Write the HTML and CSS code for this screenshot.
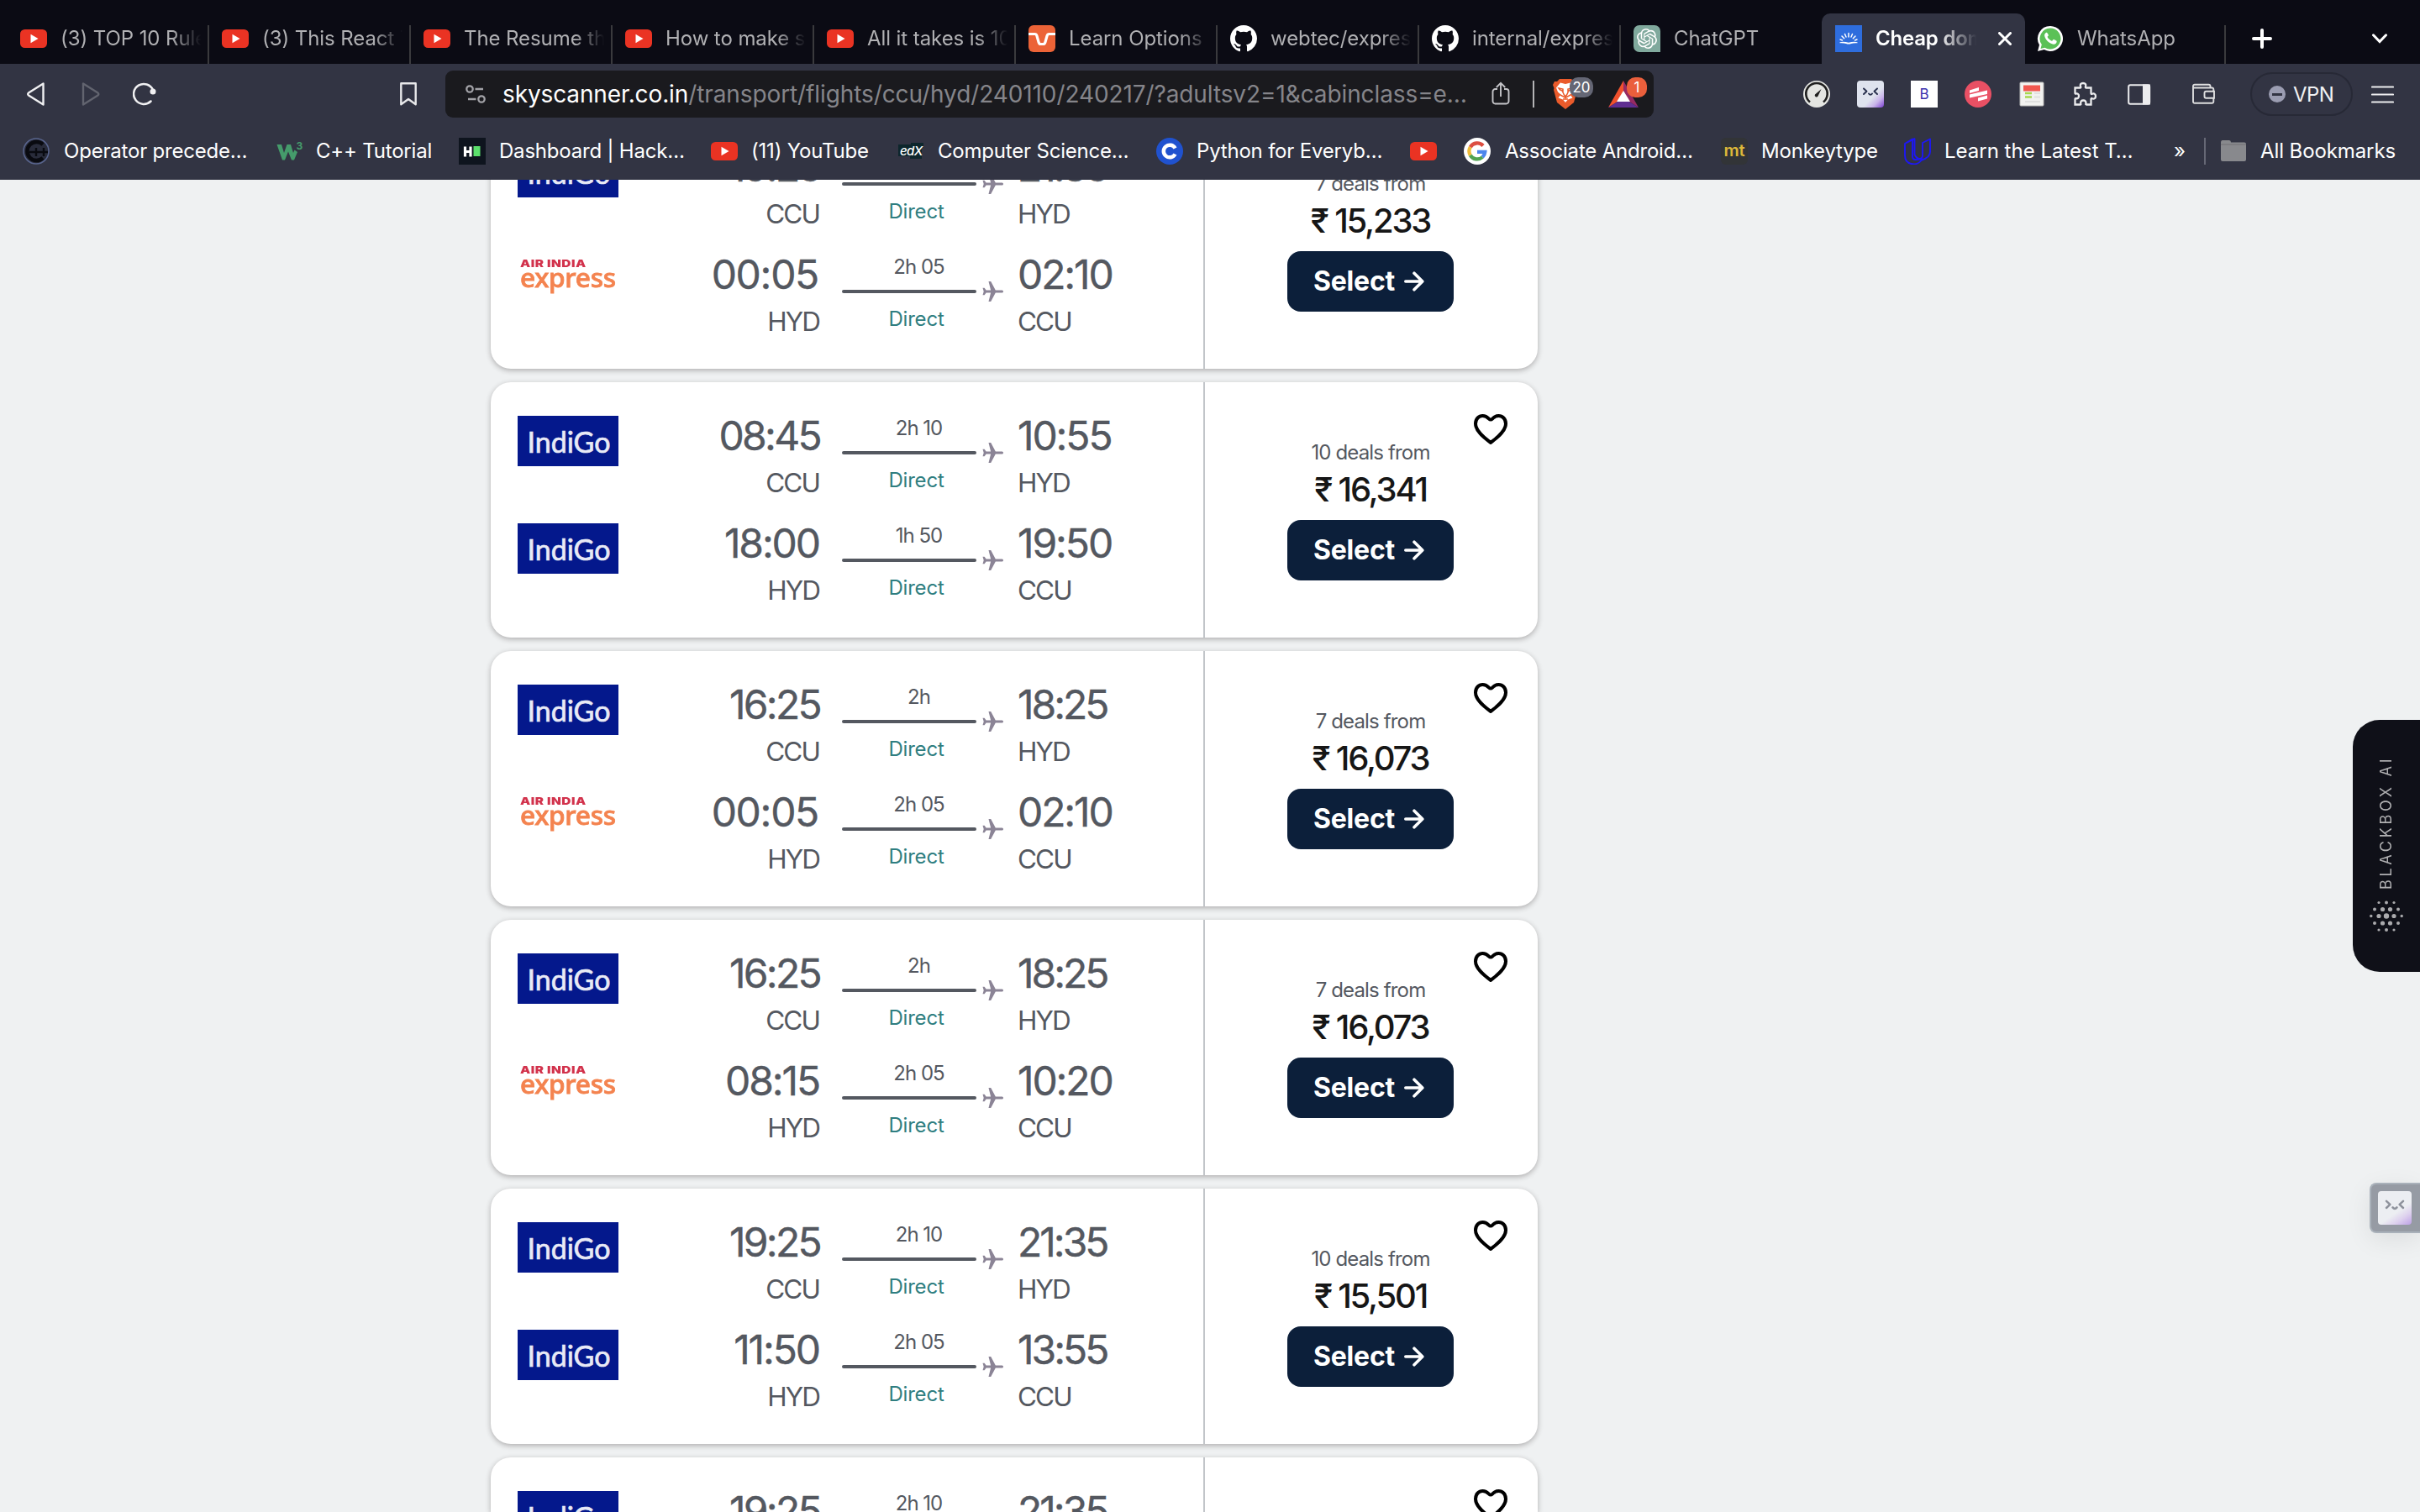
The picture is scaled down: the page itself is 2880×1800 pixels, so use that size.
FILE: index.html
```html
<!DOCTYPE html>
<html lang="en">
<head>
<meta charset="utf-8">
<title>Cheap domestic flights</title>
<link rel="stylesheet" href="styles.css">
</head>
<body>
<svg class="sprite" width="0" height="0" aria-hidden="true">
  <symbol id="yt" viewBox="0 0 32 32"><rect y="5" width="32" height="22" rx="5.5" fill="#ea3323"/><path d="M12.5 10.8v10.4l9-5.2z" fill="#fff"/></symbol>
  <symbol id="github" viewBox="0 0 16 16"><path fill="#fff" d="M8 0C3.58 0 0 3.58 0 8c0 3.54 2.29 6.53 5.47 7.59.4.07.55-.17.55-.38 0-.19-.01-.82-.01-1.49-2.01.37-2.53-.49-2.69-.94-.09-.23-.48-.94-.82-1.13-.28-.15-.68-.52-.01-.53.63-.01 1.08.58 1.23.82.72 1.21 1.87.87 2.33.66.07-.52.28-.87.51-1.07-1.78-.2-3.64-.89-3.64-3.95 0-.87.31-1.59.82-2.15-.08-.2-.36-1.02.08-2.12 0 0 .67-.21 2.2.82.64-.18 1.32-.27 2-.27s1.36.09 2 .27c1.53-1.04 2.2-.82 2.2-.82.44 1.1.16 1.92.08 2.12.51.56.82 1.27.82 2.15 0 3.07-1.87 3.75-3.65 3.95.29.25.54.73.54 1.48 0 1.07-.01 1.93-.01 2.2 0 .21.15.46.55.38A8.01 8.01 0 0 0 16 8c0-4.42-3.58-8-8-8z"/></symbol>
  <symbol id="plane" viewBox="0 0 25 24"><path fill="#8b8496" d="M25 12c0 1-.8 1.500-2 1.500h-7.200L10.200 24H7.500l2.600-10.500H4.600L2.600 16.300H.5L1.700 12 .5 7.700h2.100l2 2.800h5.500L7.500 0h2.700l5.600 10.500H23c1.200 0 2 .5 2 1.500z"/></symbol>
  <symbol id="heart" viewBox="0 0 40 36"><path d="M20 34C16 30.500 2 21.500 2 11.500 2 5.500 6 2 10.500 2 14.500 2 16.500 4 18 5.600Q20 7.600 22 5.600C23.500 4 25.500 2 29.500 2 34 2 38 5.500 38 11.500 38 21.500 24 30.500 20 34Z" fill="none" stroke="#000" stroke-width="4" stroke-linejoin="round"/></symbol>
  <symbol id="arrow" viewBox="0 0 24 24"><path d="M1.800 12H21M12 2.200l9.800 9.800-9.800 9.800" fill="none" stroke="#fff" stroke-width="3.600" stroke-linecap="round" stroke-linejoin="round"/></symbol>
  <symbol id="face" viewBox="0 0 32 32"><path d="M8 9.500l3.500 3.200L8 16M24 9.500l-3.500 3.200L24 16M14 15.500q2 2.500 4 0" fill="none" stroke="currentColor" stroke-width="2" stroke-linecap="round" stroke-linejoin="round"/></symbol>
</svg>

<header class="browser">
  <nav class="tabs">
    <div class="tab"><svg class="fav"><use href="#yt"/></svg><span>(3) TOP 10 Rules</span></div>
    <div class="tab"><svg class="fav"><use href="#yt"/></svg><span>(3) This React T</span></div>
    <div class="tab"><svg class="fav"><use href="#yt"/></svg><span>The Resume that</span></div>
    <div class="tab"><svg class="fav"><use href="#yt"/></svg><span>How to make su</span></div>
    <div class="tab"><svg class="fav"><use href="#yt"/></svg><span>All it takes is 10</span></div>
    <div class="tab"><svg class="fav" viewBox="0 0 32 32"><rect width="32" height="32" rx="6" fill="#ec6337"/><path d="M0 10.500h7.500c1.500 0 2 .6 2.400 2L12 20c.5 2 1 2.500 2.500 2.500h3c1.500 0 2-.5 2.500-2.500l2.100-7.500c.4-1.400.9-2 2.400-2H32" fill="none" stroke="#fff" stroke-width="3.200"/></svg><span>Learn Options T</span></div>
    <div class="tab"><svg class="fav"><use href="#github"/></svg><span>webtec/express</span></div>
    <div class="tab"><svg class="fav"><use href="#github"/></svg><span>internal/express</span></div>
    <div class="tab before-active"><svg class="fav" viewBox="0 0 32 32"><path d="M7 0h18a7 7 0 0 1 7 7v25H7a7 7 0 0 1-7-7V7a7 7 0 0 1 7-7z" fill="#80a99d"/><g transform="translate(4 4)" fill="#fff"><path d="M22.282 9.821a5.985 5.985 0 0 0-.516-4.910 6.046 6.046 0 0 0-6.510-2.900A6.065 6.065 0 0 0 4.981 4.182a5.985 5.985 0 0 0-3.998 2.900 6.046 6.046 0 0 0 .743 7.097 5.980 5.980 0 0 0 .511 4.911 6.051 6.051 0 0 0 6.515 2.900A5.985 5.985 0 0 0 13.260 24a6.056 6.056 0 0 0 5.772-4.206 5.990 5.990 0 0 0 3.997-2.900 6.056 6.056 0 0 0-.747-7.073zM13.260 22.430a4.476 4.476 0 0 1-2.876-1.040l.141-.081 4.779-2.758a.795.795 0 0 0 .392-.681v-6.737l2.020 1.168a.071.071 0 0 1 .038.052v5.583a4.504 4.504 0 0 1-4.494 4.494zM3.600 18.304a4.470 4.470 0 0 1-.535-3.014l.142.085 4.783 2.759a.771.771 0 0 0 .780 0l5.843-3.369v2.332a.080.080 0 0 1-.033.062L9.740 19.950a4.500 4.500 0 0 1-6.140-1.646zM2.340 7.896a4.485 4.485 0 0 1 2.366-1.973V11.600a.766.766 0 0 0 .388.676l5.815 3.355-2.020 1.168a.076.076 0 0 1-.071 0l-4.830-2.786A4.504 4.504 0 0 1 2.340 7.872zm16.597 3.855l-5.833-3.387L15.119 7.200a.076.076 0 0 1 .071 0l4.830 2.791a4.494 4.494 0 0 1-.676 8.105v-5.678a.790.790 0 0 0-.407-.667zm2.010-3.023l-.141-.085-4.774-2.782a.776.776 0 0 0-.785 0L9.409 9.230V6.897a.066.066 0 0 1 .028-.061l4.830-2.787a4.500 4.500 0 0 1 6.680 4.660zm-12.640 4.135l-2.020-1.164a.080.080 0 0 1-.038-.057V6.075a4.500 4.500 0 0 1 7.375-3.453l-.142.080L8.704 5.460a.795.795 0 0 0-.393.681zm1.097-2.365l2.602-1.500 2.607 1.500v2.999l-2.597 1.500-2.607-1.500z"/></g></svg><span>ChatGPT</span></div>
    <div class="tab active"><svg class="fav" viewBox="0 0 32 32"><path fill="#2e6ddd" d="M0 0h32v32H0z"/><g stroke="#fff" stroke-width="1.500" stroke-linecap="round"><path d="M16 9.500v4.500M11.500 10.500l1.500 3.500M20.500 10.500L19 14M8 13l2.700 2.800M24 13l-2.700 2.800M6 17l2.500 1M26 17l-2.500 1"/></g><path d="M5.500 20.200q5-.9 10.500.6 5.500-1.500 10.500-.6v1q-5-.2-7.500.7-3 1.400-6 0-2.500-.9-7.500-.7z" fill="#fff"/></svg><span>Cheap dome</span><svg class="close" viewBox="0 0 16 16"><path d="M1.500 1.500l13 13M14.500 1.500l-13 13" stroke="#fff" stroke-width="3" stroke-linecap="round"/></svg></div>
    <div class="tab"><svg class="fav" viewBox="0 0 32 32"><path d="M16 1a15 15 0 1 1-7.300 28.100L1 31l2-7.500A15 15 0 0 1 16 1z" fill="#fff"/><path d="M16 3.500a12.500 12.500 0 1 1-6.500 23.200L4.500 28l1.300-4.900A12.500 12.500 0 0 1 16 3.500z" fill="#5bc157"/><path d="M11.800 8.800c-.6-.1-3 1-2.600 4 .6 4.200 6 9.700 10.700 9.900 2.300 0 3.900-1.500 3.800-3.700 0-.6-3.500-2.300-4-2.100-.7.300-1.300 2-1.900 1.900-1.900-.5-4.600-3-5.200-4.700-.1-.6 1.400-1.400 1.300-2.100-.1-.6-1.400-3.200-2.100-3.200z" fill="#fff"/></svg><span>WhatsApp</span></div>
    <svg class="newtab" viewBox="0 0 24 24"><path d="M12 2v20M2 12h20" stroke="#fff" stroke-width="4" stroke-linecap="round"/></svg>
    <svg class="chev" viewBox="0 0 18 12"><path d="M1.500 1.800L9 9.500l7.500-7.700" fill="none" stroke="#fff" stroke-width="3" stroke-linecap="round"/></svg>
  </nav>

  <div class="toolbar">
    <svg class="t-back" viewBox="0 0 22 30"><path d="M19.500 2.500v25L2 16.500q-1.500-1.500 0-3z" fill="none" stroke="#f0f0f2" stroke-width="2.400" stroke-linejoin="round"/></svg>
    <svg class="t-fwd" viewBox="0 0 22 30"><path d="M2 2.500v25L19.500 16.500q1.500-1.500 0-3z" fill="none" stroke="#62646f" stroke-width="2.400" stroke-linejoin="round"/></svg>
    <svg class="t-reload" viewBox="0 0 28 28"><path d="M21.500 22.500A12 12 0 1 1 24 9" fill="none" stroke="#f0f0f2" stroke-width="2.500" stroke-linecap="round"/><circle cx="24" cy="11" r="3.500" fill="#f0f0f2"/></svg>
    <svg class="t-mark" viewBox="0 0 20 28"><path d="M1.300 1.300h17.400v24.900L10 20l-8.700 6.200z" fill="none" stroke="#e8e8ea" stroke-width="2.400" stroke-linejoin="round"/></svg>
    <div class="url">
      <svg class="u-site" viewBox="0 0 24 24"><g fill="none" stroke="#a3a3a8" stroke-width="2.300"><circle cx="5" cy="6" r="3.700"/><path d="M11.500 6H21M3 18h9.500"/><circle cx="19" cy="18" r="3.700"/></g></svg>
      <p><b>skyscanner.co.in</b>/transport/flights/ccu/hyd/240110/240217/?adultsv2=1&amp;cabinclass=e…</p>
      <svg class="u-share" viewBox="0 0 22 28"><path d="M7 9H4.500a3 3 0 0 0-3 3v11.500a3 3 0 0 0 3 3h13a3 3 0 0 0 3-3V12a3 3 0 0 0-3-3H15M11 18V2M5.800 7L11 1.800 16.200 7" fill="none" stroke="#c4c4c8" stroke-width="1.900"/></svg>
      <i class="u-sep"></i>
      <div class="shield"><svg viewBox="0 0 30 36"><path d="M8 0h14l3 3h3l2 4-1.500 4 .5 2-4 15-10 8-10-8-4-15 .5-2L0 7l2-4h3z" fill="#ea5b2b"/><path d="M15 6l6-1.500 5 6-2 5-3.500 3 3 4-5.500 2L15 28l-3-3.500-5.500-2 3-4-3.500-3-2-5 5-6z" fill="#fff"/><path d="M7 11l5 1v2.500L8.500 13zM23 11l-5 1v2.500l3.500-1.500zM11.500 15l2 4L15 21l1.500-2 2-4M9 19l6 3.500 6-3.500M12 24h6" fill="none" stroke="#ea5b2b" stroke-width="1.500"/></svg><em>20</em></div>
      <div class="bat"><svg viewBox="0 0 36 32"><path d="M18 0L0 32l11-7 7-12z" fill="#f0512d"/><path d="M18 0l18 32-11-7-7-12z" fill="#962a63"/><path d="M0 32h36l-11-7H11z" fill="#5f2e91"/><path d="M18 12l-8 13h16z" fill="#fff"/></svg><em>1</em></div>
    </div>
    <div class="exts">
      <svg viewBox="0 0 32 32"><circle cx="16" cy="16" r="16" fill="#e4e5e2"/><path d="M8 25.500A12.700 12.700 0 1 1 24 25.500" fill="none" stroke="#1f1f1f" stroke-width="2.600"/><path d="M21.500 10l-4 8.500a2 2 0 0 1-3.500-2z" fill="#1f1f1f"/></svg>
      <span class="face-ic"><svg><use href="#face"/></svg></span>
      <span class="b-ic">B</span>
      <svg viewBox="0 0 32 32"><circle cx="16" cy="16" r="16" fill="#e95064"/><path d="M6 11.500L17 8v4L6 15zM6 16.500l21-5v4.500L6 20.500zM16 20.500l11-3v4L16 24.500z" fill="#fff"/></svg>
      <svg viewBox="0 0 32 32"><rect x="2" y="2" width="28" height="28" rx="1" fill="#f2f2f0" stroke="#b9b9b8"/><path d="M6 5.500h20v7H6z" fill="#f1574f"/><path d="M8 15h8M8 19.500h8" stroke="#a6d84f" stroke-width="2.600"/><path d="M19 15h7M19 19.500h7M8 25h18" stroke="#e0e0df" stroke-width="2"/></svg>
      <svg viewBox="0 0 32 32"><path d="M4.500 7.500h6c.8 0 1-.7.600-1.400C10 3.500 11.500 2 14 2s4 1.500 3 4.100c-.4.700 0 1.400.8 1.400h5.700V14c0 .9.500 1.200 1.300.8 2.500-1 4.200.2 4.200 2.700s-1.700 3.700-4.200 2.700c-.8-.4-1.300-.1-1.300.8v6.500H18c-.8 0-1-.3-.7-1.200.7-2.300-.8-3.800-3-3.800s-3.700 1.500-3 3.800c.3.900 0 1.200-.8 1.200h-6V21c0-.8.400-1 1.200-.8 2.200.4 3.300-.9 3.300-2.900s-1.200-3.200-3.300-2.800c-.8.200-1.200 0-1.200-.8z" transform="translate(-1 1)" fill="none" stroke="#ececee" stroke-width="2.300"/></svg>
      <svg viewBox="0 0 32 32"><rect x="3.200" y="5.200" width="25" height="22.500" rx="2" fill="none" stroke="#ececee" stroke-width="2"/><path d="M20 4.500h9v24h-9z" fill="#ececee"/></svg>
    </div>
    <svg class="wallet" viewBox="0 0 28 26"><path d="M2 5.500h22.500a1.800 1.800 0 0 1 1.800 1.800V10M26.300 17.500V22a1.800 1.800 0 0 1-1.800 1.800H3.800A1.800 1.800 0 0 1 2 22V3.500A1.800 1.800 0 0 1 3.800 1.700h16.700q2 0 2 2v1.500M27 9.800v8H17.500a2 2 0 0 1-2-2v-4a2 2 0 0 1 2-2z" fill="none" stroke="#dededf" stroke-width="1.900"/></svg>
    <div class="vpn"><i></i>VPN</div>
    <svg class="menu" viewBox="0 0 27 21"><path d="M1 1.500h25M1 10.500h25M1 19.500h25" stroke="#ececee" stroke-width="2.200" stroke-linecap="round"/></svg>
  </div>

  <nav class="bookmarks">
    <a class="bm w1"><svg class="fav" viewBox="0 0 32 32"><circle cx="16" cy="16" r="15" fill="#292c3b" stroke="#59658e" stroke-width="1.500"/><path d="M24 8A11 11 0 1 0 24 24" fill="none" stroke="#090a10" stroke-width="4.500"/><path d="M8 17h22M16 12v10M25 12v10" stroke="#090a10" stroke-width="2.400"/></svg>Operator precede…</a>
    <a class="bm w2"><svg class="fav" viewBox="0 0 32 32"><path d="M1.500 8h5.500l3 10 3.500-10h4.500l3 10 1.500-3.500 3.500 2.500-4 9.500h-3l-4-10-4 10h-3z" fill="#459b6b"/><text x="24.500" y="14" font-size="12" font-weight="700" fill="#459b6b" font-family="Inter,sans-serif">3</text></svg>C++ Tutorial</a>
    <a class="bm w3"><svg class="fav" viewBox="0 0 32 32"><path d="M0 0h32v32H0z" fill="#0e141e"/><path d="M7.500 10.500v12M14 10.500v12M7.500 16.500H14" stroke="#fff" stroke-width="3.200"/><path d="M17.500 10h8v12h-8z" fill="#5be06c"/></svg>Dashboard | Hack…</a>
    <a class="bm w4"><svg class="fav"><use href="#yt"/></svg>(11) YouTube</a>
    <a class="bm w5"><svg class="fav" viewBox="0 0 32 32"><path d="M1 8h15V6h15v6h-2v13H15v-3H1z" fill="#0d262c"/><text x="3" y="21" font-size="15" font-style="italic" font-weight="500" fill="#fff" font-family="Inter,sans-serif" textLength="27">edX</text></svg>Computer Science…</a>
    <a class="bm w6"><svg class="fav" viewBox="0 0 32 32"><circle cx="16" cy="16" r="16" fill="#2052cf"/><path d="M22.500 12.500A7.300 7.300 0 1 0 22.500 19.500" fill="none" stroke="#fff" stroke-width="4.500"/></svg>Python for Everyb…</a>
    <a class="bm w7"><svg class="fav"><use href="#yt"/></svg></a>
    <a class="bm w8"><svg class="fav" viewBox="0 0 32 32"><circle cx="16" cy="16" r="16" fill="#fff"/><g fill="none" stroke-width="4.300"><path d="M23 9.500A9.500 9.500 0 0 0 7.800 11.200" stroke="#dc4e41"/><path d="M7.800 11.200a9.500 9.500 0 0 0 0 9.600" stroke="#efbb3a"/><path d="M7.800 20.800A9.500 9.500 0 0 0 22.300 23" stroke="#51a351"/><path d="M22.300 23a9.500 9.500 0 0 0 3-6.200H16" stroke="#4c86ec"/></g></svg>Associate Android…</a>
    <a class="bm w9"><svg class="fav" viewBox="0 0 32 32"><rect width="32" height="32" rx="6" fill="#323437"/><text x="3.500" y="22" font-size="19" font-weight="600" fill="#deb83a" font-family="Inter,sans-serif" textLength="25" lengthAdjust="spacingAndGlyphs">mt</text></svg>Monkeytype</a>
    <a class="bm w10"><svg class="fav" viewBox="0 0 32 32"><path d="M1 7l9-5.500V22q0 4 3.500 4T22 25M1 7v14q0 10 11 10.500 5 0 9-5 10-3 10-10V1.500L22 6v15q0 4-3.500 4T12.500 20V1.200z" fill="none" stroke="#1d17f5" stroke-width="1.900" stroke-linejoin="round"/></svg>Learn the Latest T…</a>
    <span class="more">»</span>
    <i class="bsep"></i>
    <a class="all"><svg viewBox="0 0 30 26"><path d="M0 3q0-3 2-3h8q2 0 2 2.500h16q2 0 2 2V23q0 2-2 2H2q-2 0-2-2z" fill="#88898d"/><path d="M0 5h30" stroke="#707175"/></svg>All Bookmarks</a>
  </nav>
</header>

<main class="results">
  <article class="card">
    <div class="legs">
      <div class="leg"><div class="logo indigo">IndiGo</div><div class="dep"><b class="narrow">19:25</b><span>CCU</span></div><div class="route"><span>2h 10</span><div class="line"><i></i><svg><use href="#plane"/></svg></div><em>Direct</em></div><div class="arr"><b class="narrow">21:35</b><span>HYD</span></div></div>
      <div class="leg"><div class="logo aix"><small>AIR INDIA</small><strong>express</strong></div><div class="dep"><b class="wide">00:05</b><span>HYD</span></div><div class="route"><span>2h 05</span><div class="line"><i></i><svg><use href="#plane"/></svg></div><em>Direct</em></div><div class="arr"><b>02:10</b><span>CCU</span></div></div>
    </div>
    <div class="deal"><svg class="heart"><use href="#heart"/></svg><span>7 deals from</span><b>₹ 15,233</b><button>Select<svg><use href="#arrow"/></svg></button></div>
  </article>
  <article class="card">
    <div class="legs">
      <div class="leg"><div class="logo indigo">IndiGo</div><div class="dep"><b class="narrow">08:45</b><span>CCU</span></div><div class="route"><span>2h 10</span><div class="line"><i></i><svg><use href="#plane"/></svg></div><em>Direct</em></div><div class="arr"><b>10:55</b><span>HYD</span></div></div>
      <div class="leg"><div class="logo indigo">IndiGo</div><div class="dep"><b>18:00</b><span>HYD</span></div><div class="route"><span>1h 50</span><div class="line"><i></i><svg><use href="#plane"/></svg></div><em>Direct</em></div><div class="arr"><b>19:50</b><span>CCU</span></div></div>
    </div>
    <div class="deal"><svg class="heart"><use href="#heart"/></svg><span>10 deals from</span><b>₹ 16,341</b><button>Select<svg><use href="#arrow"/></svg></button></div>
  </article>
  <article class="card">
    <div class="legs">
      <div class="leg"><div class="logo indigo">IndiGo</div><div class="dep"><b class="narrow">16:25</b><span>CCU</span></div><div class="route"><span>2h</span><div class="line"><i></i><svg><use href="#plane"/></svg></div><em>Direct</em></div><div class="arr"><b class="narrow">18:25</b><span>HYD</span></div></div>
      <div class="leg"><div class="logo aix"><small>AIR INDIA</small><strong>express</strong></div><div class="dep"><b class="wide">00:05</b><span>HYD</span></div><div class="route"><span>2h 05</span><div class="line"><i></i><svg><use href="#plane"/></svg></div><em>Direct</em></div><div class="arr"><b>02:10</b><span>CCU</span></div></div>
    </div>
    <div class="deal"><svg class="heart"><use href="#heart"/></svg><span>7 deals from</span><b>₹ 16,073</b><button>Select<svg><use href="#arrow"/></svg></button></div>
  </article>
  <article class="card">
    <div class="legs">
      <div class="leg"><div class="logo indigo">IndiGo</div><div class="dep"><b class="narrow">16:25</b><span>CCU</span></div><div class="route"><span>2h</span><div class="line"><i></i><svg><use href="#plane"/></svg></div><em>Direct</em></div><div class="arr"><b class="narrow">18:25</b><span>HYD</span></div></div>
      <div class="leg"><div class="logo aix"><small>AIR INDIA</small><strong>express</strong></div><div class="dep"><b>08:15</b><span>HYD</span></div><div class="route"><span>2h 05</span><div class="line"><i></i><svg><use href="#plane"/></svg></div><em>Direct</em></div><div class="arr"><b>10:20</b><span>CCU</span></div></div>
    </div>
    <div class="deal"><svg class="heart"><use href="#heart"/></svg><span>7 deals from</span><b>₹ 16,073</b><button>Select<svg><use href="#arrow"/></svg></button></div>
  </article>
  <article class="card">
    <div class="legs">
      <div class="leg"><div class="logo indigo">IndiGo</div><div class="dep"><b class="narrow">19:25</b><span>CCU</span></div><div class="route"><span>2h 10</span><div class="line"><i></i><svg><use href="#plane"/></svg></div><em>Direct</em></div><div class="arr"><b class="narrow">21:35</b><span>HYD</span></div></div>
      <div class="leg"><div class="logo indigo">IndiGo</div><div class="dep"><b>11:50</b><span>HYD</span></div><div class="route"><span>2h 05</span><div class="line"><i></i><svg><use href="#plane"/></svg></div><em>Direct</em></div><div class="arr"><b class="narrow">13:55</b><span>CCU</span></div></div>
    </div>
    <div class="deal"><svg class="heart"><use href="#heart"/></svg><span>10 deals from</span><b>₹ 15,501</b><button>Select<svg><use href="#arrow"/></svg></button></div>
  </article>
  <article class="card last">
    <div class="legs">
      <div class="leg"><div class="logo indigo">IndiGo</div><div class="dep"><b class="narrow">19:25</b></div><div class="route"><span>2h 10</span></div><div class="arr"><b class="narrow">21:35</b></div></div>
    </div>
    <div class="deal"><svg class="heart"><use href="#heart"/></svg></div>
  </article>
</main>

<aside class="blackbox">
  <span>BLACKBOX AI</span>
  <svg viewBox="0 0 40 38" fill="#aaaaad"><circle cx="11" cy="2.500" r="1.600"/><circle cx="20" cy="2.500" r="2"/><circle cx="29" cy="2.500" r="1.600"/><circle cx="6" cy="10.500" r="2"/><circle cx="15.500" cy="10.500" r="2.600"/><circle cx="24.500" cy="10.500" r="2.600"/><circle cx="34" cy="10.500" r="2"/><circle cx="1.800" cy="18.500" r="1.700"/><circle cx="11" cy="18.500" r="2.600"/><circle cx="20" cy="18.500" r="3.200"/><circle cx="29" cy="18.500" r="2.600"/><circle cx="38.200" cy="18.500" r="1.700"/><circle cx="6" cy="27" r="2"/><circle cx="15.500" cy="27" r="2.600"/><circle cx="24.500" cy="27" r="2.600"/><circle cx="34" cy="27" r="2"/><circle cx="11" cy="35" r="1.600"/><circle cx="20" cy="35" r="2"/><circle cx="29" cy="35" r="1.600"/></svg>
</aside>
<aside class="buddy"><span><svg><use href="#face"/></svg></span></aside>
</body>
</html>
```
FILE: styles.css
```css
* { box-sizing: border-box; }
html, body { margin: 0; height: 1800px; overflow: hidden; }
body { background: #eff1f2; font-family: Inter, "Liberation Sans", sans-serif; display: flex; flex-direction: column; position: relative; }
svg { display: block; flex: none; }
i, em { font-style: normal; }
.sprite { position: absolute; }

/* browser chrome */
.browser { height: 214px; flex: none; background: #323443; color: #fff; position: relative; z-index: 1; }
.tabs { height: 76px; background: #0b0b14; display: flex; align-items: flex-end; padding-left: 8px; }
.fav { width: 32px; height: 32px; }
.tab { width: 240px; height: 60px; padding: 0 16px 0 16px; display: flex; align-items: center; gap: 16px; position: relative; color: #b0b0b3; font-size: 24px; }
.tab::after { content: ""; width: 2px; height: 46px; background: #3a3a3d; position: absolute; right: -1px; bottom: 0; }
.tab.active::after, .tab.before-active::after { display: none; }
.tab span { flex: 1; white-space: nowrap; overflow: hidden; line-height: 32px; margin-right: -9px; letter-spacing: -.08px; -webkit-mask-image: linear-gradient(90deg, #000 78%, transparent 99%); mask-image: linear-gradient(90deg, #000 78%, transparent 99%); }
.tab.active { background: #323443; border-radius: 10px 10px 0 0; color: #fff; font-weight: 600; width: 242px; margin-right: -2px; }
.tab.active span { flex: none; width: 123px; margin: 0; letter-spacing: -.2px; -webkit-mask-image: linear-gradient(90deg, #000 60%, transparent 98%); mask-image: linear-gradient(90deg, #000 60%, transparent 98%); }
.close { width: 16px; height: 16px; margin-left: 7px; }
.newtab { width: 24px; height: 24px; margin: 0 0 18px 32px; }
.chev { width: 18px; height: 12px; margin: 0 39px 24px auto; }

.toolbar { height: 72px; display: flex; align-items: center; padding-left: 32px; }
.t-back, .t-fwd { width: 22px; height: 30px; }
.t-fwd { margin-left: 43px; }
.t-reload { width: 28px; height: 28px; margin-left: 39px; }
.t-mark { width: 20px; height: 28px; margin-left: 290px; }
.url { width: 1438px; height: 56px; margin-left: 34px; background: #1a1a1e; border-radius: 9px; display: flex; align-items: center; position: relative; flex: none; }
.u-site { width: 24px; height: 24px; margin-left: 24px; }
.url p { margin: 0 0 0 20px; width: 1154px; font-size: 28px; line-height: 40px; white-space: nowrap; color: #85858a; letter-spacing: -.1px; }
.url p b { font-weight: 400; color: #fff; letter-spacing: -.12px; }
.u-share { width: 22px; height: 28px; margin: -2px 0 0 23px; }
.u-sep { width: 2px; height: 32px; background: #b4b4b6; margin-left: 27px; }
.shield, .bat { position: relative; }
.shield { margin-left: 22px; }
.shield svg { width: 30px; height: 36px; }
.bat { margin-left: 36px; }
.bat svg { width: 36px; height: 32px; }
.shield em, .bat em { position: absolute; height: 24px; line-height: 24px; border-radius: 10px; font-size: 17px; text-align: center; }
.shield em { left: 20px; top: -2px; width: 28px; background: #646674; }
.bat em { left: 22px; top: -4px; width: 24px; background: #ea5f3c; }
.exts { display: flex; gap: 32px; margin-left: 178px; }
.exts svg { width: 32px; height: 32px; }
.face-ic { width: 32px; height: 32px; border-radius: 4px; background: linear-gradient(135deg, #dfe3ee 60%, #c9b3ea 78%, #7a3fd0); color: #2c3350; }
.b-ic { width: 32px; height: 32px; background: #fff; color: #3b32ae; font-size: 17px; line-height: 33px; text-align: center; }
.wallet { width: 28px; height: 26px; margin-left: 46px; }
.vpn { width: 122px; height: 52px; border: 2px solid #272936; border-radius: 26px; margin-left: 42px; display: flex; align-items: center; gap: 9px; padding-left: 20px; font-size: 24px; color: #f0f0f2; letter-spacing: -.6px; flex: none; }
.vpn i { width: 20px; height: 20px; border-radius: 50%; background: linear-gradient(#323443, #323443) center / 12px 3px no-repeat #9b9db2; }
.menu { width: 27px; height: 21px; margin-left: 22px; }

.bookmarks { height: 64px; display: flex; align-items: center; padding-left: 27px; font-size: 24px; line-height: 32px; letter-spacing: -.2px; }
.bm { display: flex; align-items: center; gap: 17px; white-space: nowrap; flex: none; }
.w1 { width: 301px; } .w2 { width: 218px; } .w3 { width: 300px; } .w4 { width: 222px; } .w5 { width: 308px; }
.w6 { width: 302px; } .w7 { width: 64px; } .w8 { width: 306px; } .w9 { width: 218px; } .w10 { width: 321px; letter-spacing: 0; }
.w2, .w3, .w4, .w5, .w6, .w9, .w10 { gap: 16px; }
.more { width: 36px; }
.bsep { width: 2px; height: 32px; background: #666875; }
.all { display: flex; align-items: center; gap: 17px; margin-left: 18px; white-space: nowrap; letter-spacing: -.1px; }
.all svg { width: 30px; height: 26px; }

/* flight results */
.results { width: 1246px; margin: -79px 0 0 584px; display: flex; flex-direction: column; gap: 16px; }
.card { height: 304px; flex: none; display: flex; background: #fff; border-radius: 24px; box-shadow: 0 2px 6px rgba(37, 32, 31, .32); }
.card.last { height: 65px; border-radius: 24px 24px 0 0; overflow: hidden; }
.legs { width: 848px; padding: 24px 0 0 32px; }
.leg { height: 128px; display: flex; color: #545860; }
.logo { width: 120px; height: 60px; margin-top: 16px; flex: none; }
.indigo { background: #04188c; color: #e8eaf6; font: 34px/62px Lato, sans-serif; text-align: center; padding-left: 2px; letter-spacing: 0; -webkit-text-stroke: .7px #e8eaf6; }
.aix { padding: 4px 0 0 3px; }
.aix small { display: block; font: 900 12px/14px Inter, sans-serif; color: #d2324c; transform-origin: 0 0; letter-spacing: .4px; height: 14px; width: 70px; white-space: nowrap; transform: scaleX(1.28); }
.aix strong { display: block; font: 500 31px/42px "Noto Sans", sans-serif; color: #f4834f; margin-top: -12px; transform: scaleX(1.02); transform-origin: 0 0; letter-spacing: -.3px; width: 112px; -webkit-text-stroke: .8px #f4834f; }
.dep, .arr { display: flex; flex-direction: column; gap: 8px; padding-top: 12px; }
.dep { width: 239px; align-items: flex-end; }
.arr { margin-left: 17px; }
.dep b, .arr b { font-weight: 400; font-size: 48px; line-height: 56px; letter-spacing: -2.1px; margin-right: 0; -webkit-text-stroke: .4px #545860; }
.dep b.narrow { letter-spacing: -2.7px; margin-right: -1px; }
.arr b.narrow { letter-spacing: -3px; }
.dep b.wide { letter-spacing: -1.3px; margin-right: 1px; }
.dep span, .arr span { font-size: 31.500px; line-height: 40px; letter-spacing: -1.9px; }
.route { width: 192px; margin-left: 27px; padding-top: 15px; display: flex; flex-direction: column; font-size: 24px; }
.route span { width: 183px; height: 33px; line-height: 32px; text-align: center; letter-spacing: -1px; }
.line { display: flex; align-items: center; justify-content: space-between; height: 24px; }
.line i { width: 160px; height: 4px; background: #545860; border-radius: 2px; }
.line svg { width: 25px; height: 24px; }
.route em { width: 177px; line-height: 32px; margin-top: 5px; text-align: center; color: #2f7e80; letter-spacing: -.2px; }
.deal { flex: 1; border-left: 2px solid #c2c5c9; position: relative; display: flex; flex-direction: column; align-items: center; padding: 68px 2px 0 0; color: #545860; }
.deal span { font-size: 24px; line-height: 32px; letter-spacing: -.85px; }
.deal b { font-weight: 500; font-size: 40px; line-height: 48px; margin: 4px 0 12px; color: #161616; letter-spacing: -2.2px; }
.deal button { width: 198px; height: 72px; border: 0; border-radius: 16px; background: #0c1f3a; color: #fff; font: 700 32px/40px Inter, sans-serif; letter-spacing: -.2px; display: flex; align-items: center; justify-content: center; gap: 11px; padding: 0 4px 0 0; }
.deal button svg { width: 24px; height: 24px; }
.heart { position: absolute; right: 36px; top: 38px; width: 40px; height: 36px; }

/* floating extension widgets */
.blackbox { position: absolute; left: 2800px; top: 857px; width: 80px; height: 300px; background: #0f1018; border-radius: 32px 0 0 32px; display: flex; flex-direction: column; align-items: center; padding-top: 42px; }
.blackbox span { writing-mode: vertical-rl; transform: rotate(180deg); font-size: 18px; line-height: 24px; height: 160px; letter-spacing: 3.700px; color: #b0b0b2; white-space: nowrap; }
.blackbox svg { width: 40px; height: 38px; margin-top: 13px; }
.buddy { position: absolute; left: 2820px; top: 1408px; width: 60px; height: 60px; background: #969ba4; border: 2px solid #a9b1ba; border-right: 0; border-radius: 8px 0 0 8px; padding: 8px; box-shadow: 0 8px 30px rgba(0, 0, 0, .08); }
.buddy span { display: block; width: 40px; height: 40px; border-radius: 4px; background: linear-gradient(145deg, #eceef2 60%, #ddd0ee 78%, #bda0e6); color: #8e929c; }
.buddy svg { width: 40px; height: 40px; }
```
